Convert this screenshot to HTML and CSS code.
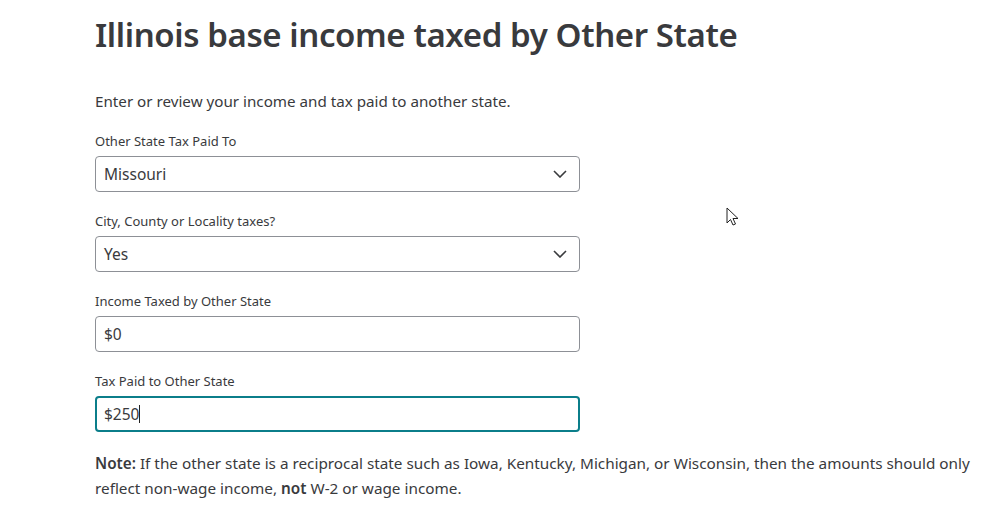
FILE: index.html
```html
<!DOCTYPE html>
<html>
  <head>
    <title>Illinois base income taxed by Other State</title>
    <link rel="stylesheet" href="styles.css">
  </head>
  <body>
    <main class="page">
      <h1 class="page-title">Illinois base income taxed by Other State</h1>
      <p class="intro">Enter or review your income and tax paid to another state.</p>

      <div class="field">
        <label class="field-label">Other State Tax Paid To</label>
        <div class="select-box">
          <span>Missouri</span>
          <svg class="chevron" width="14" height="8" viewBox="0 0 14 8"><path d="M1 1l6 6 6-6" fill="none" stroke="#393a3d" stroke-width="1.6"/></svg>
        </div>
      </div>

      <div class="field">
        <label class="field-label">City, County or Locality taxes?</label>
        <div class="select-box">
          <span>Yes</span>
          <svg class="chevron" width="14" height="8" viewBox="0 0 14 8"><path d="M1 1l6 6 6-6" fill="none" stroke="#393a3d" stroke-width="1.6"/></svg>
        </div>
      </div>

      <div class="field">
        <label class="field-label">Income Taxed by Other State</label>
        <div class="text-box">$0</div>
      </div>

      <div class="field">
        <label class="field-label">Tax Paid to Other State</label>
        <div class="text-box focused">$250<span class="caret"></span></div>
      </div>

      <p class="note"><b>Note:</b> If the other state is a reciprocal state such as Iowa, Kentucky, Michigan, or Wisconsin, then the amounts should only reflect non-wage income, <b>not</b> W-2 or wage income.</p>
    </main>

    <svg class="pointer" width="14" height="20" viewBox="0 0 14 20"><path d="M1 1v15l3.5-3.5 2.5 5.5 2.5-1-2.5-5.5h5z" fill="#fff" stroke="#222" stroke-width="1"/></svg>
  </body>
</html>
```

FILE: styles.css
```css
body {
  margin: 0;
  background: #fff;
  color: #393a3d;
  font-family: "Noto Sans", sans-serif;
}

.page {
  padding: 12px 0 0 95px;
  width: 885px;
}

.page-title {
  margin: 0 0 33px 0;
  font-size: 33px;
  line-height: 46px;
  font-weight: 600;
  letter-spacing: -0.4px;
}

.intro {
  margin: 0 0 21px 0;
  font-size: 15.2px;
}

.field {
  margin-bottom: 20px;
}

.field:last-of-type {
  margin-bottom: 0;
}

.field-label {
  display: block;
  font-size: 13px;
  margin-bottom: 6px;
}

.select-box,
.text-box {
  width: 485px;
  height: 36px;
  box-sizing: border-box;
  border: 1px solid #8d9096;
  border-radius: 4px;
  padding: 0 12px 0 8px;
  display: flex;
  align-items: center;
  justify-content: space-between;
  font-size: 15.5px;
}

.text-box {
  justify-content: flex-start;
}

.text-box.focused {
  border: 2px solid #0b7e8a;
  padding-left: 7px;
}

.caret {
  display: inline-block;
  width: 1px;
  height: 18px;
  background: #222;
}

.note {
  margin: 19px 0 0 0;
  font-size: 15.3px;
  line-height: 25px;
}

.note b {
  font-weight: 600;
}

.pointer {
  position: absolute;
  left: 726px;
  top: 207px;
}
```
